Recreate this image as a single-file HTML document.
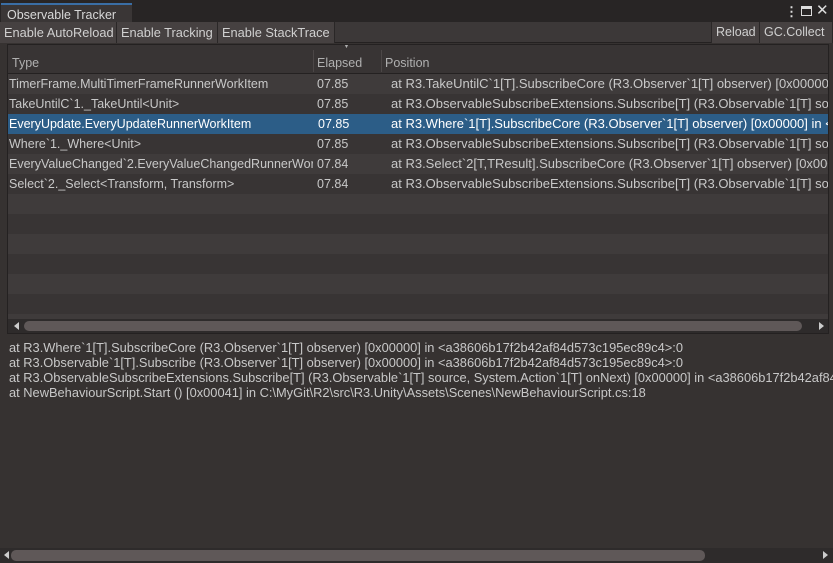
<!DOCTYPE html><html><head><style>
*{margin:0;padding:0;box-sizing:border-box}
body{width:833px;height:563px;background:#363231;font-family:"Liberation Sans",sans-serif;font-size:12.5px;color:#c8c8c8;position:relative;overflow:hidden}
.abs{position:absolute;white-space:nowrap;overflow:hidden}
.tabbar{left:0;top:0;width:833px;height:22px;background:#282525}
.tab{left:1px;top:3px;width:131px;height:19px;background:#3a3636;border-top:2px solid #3a6ea5;padding:3px 0 0 6px;color:#d8d8d8}
.tb{left:0;top:22px;width:833px;height:21px;background:#3c3838;border-bottom:1px solid #242121}
.btn{top:22px;height:21px;background:#464141;border-right:1px solid #2a2727;padding:3px 4px 0;color:#d0d0d0}
.table{left:7px;top:44px;width:822px;height:290px;border:1px solid #242121;background:#383434;overflow:hidden}
.row{position:absolute;left:0;width:822px;height:20px}
.row span{position:absolute;top:3px;white-space:nowrap}
.row span.p{font-size:13px;top:2px}
.sel{background:#2c5d87!important;color:#fff}
</style></head><body>
<div class="abs tabbar"></div>
<div class="abs tab">Observable Tracker</div>
<div class="abs" style="left:785px;top:4px;color:#ddd;font-size:13px;font-weight:bold">⋮</div>
<div class="abs" style="left:801px;top:6px;width:11px;height:10px;border:1.5px solid #ddd;border-top-width:3px"></div>
<div class="abs" style="left:816px;top:1px;color:#ddd;font-size:15px">✕</div>
<div class="abs tb"></div>
<div class="abs btn" style="left:0;width:117px;font-size:12.8px">Enable AutoReload</div>
<div class="abs btn" style="left:117px;width:101px;font-size:12.8px">Enable Tracking</div>
<div class="abs btn" style="left:218px;width:117px;font-size:12.8px">Enable StackTrace</div>
<div class="abs btn" style="left:711px;width:49px;border-left:1px solid #2a2727">Reload</div>
<div class="abs btn" style="left:760px;width:73px">GC.Collect</div>
<div class="abs table">
<div class="row" style="top:0;height:29px;background:#383434;border-bottom:1px solid #242121;color:#b0b0b0"><span style="left:4px;top:11px">Type</span><span style="left:335px;top:-2px;font-size:7px">▼</span><span style="left:309px;top:11px">Elapsed</span><span style="left:377px;top:11px">Position</span>
<div style="position:absolute;left:305px;top:5px;width:1px;height:22px;background:#4c4747"></div><div style="position:absolute;left:373px;top:5px;width:1px;height:22px;background:#4c4747"></div></div>
<div class="row" style="top:29px;background:#3f3b3b"><span style="left:1px">TimerFrame.MultiTimerFrameRunnerWorkItem</span><span style="left:309px">07.85</span><span class="p" style="left:383px">at R3.TakeUntilC`1[T].SubscribeCore (R3.Observer`1[T] observer) [0x00000] in &lt;a38606b17f2b42af84d573c195ec89c4&gt;:0</span></div>
<div class="row" style="top:49px"><span style="left:1px">TakeUntilC`1._TakeUntil&lt;Unit&gt;</span><span style="left:309px">07.85</span><span class="p" style="left:383px">at R3.ObservableSubscribeExtensions.Subscribe[T] (R3.Observable`1[T] source, System.Action`1[T] onNext)</span></div>
<div class="row sel" style="top:69px"><span style="left:1px">EveryUpdate.EveryUpdateRunnerWorkItem</span><span style="left:310px">07.85</span><span class="p" style="left:383px">at R3.Where`1[T].SubscribeCore (R3.Observer`1[T] observer) [0x00000] in &lt;a38606b17f2b42af84d573c195ec89c4&gt;:0</span></div>
<div class="row" style="top:89px"><span style="left:1px">Where`1._Where&lt;Unit&gt;</span><span style="left:309px">07.85</span><span class="p" style="left:383px">at R3.ObservableSubscribeExtensions.Subscribe[T] (R3.Observable`1[T] source, System.Action`1[T] onNext)</span></div>
<div class="row" style="top:109px;background:#3f3b3b"><span style="left:1px;width:304px;overflow:hidden">EveryValueChanged`2.EveryValueChangedRunnerWorkItem</span><span style="left:309px">07.84</span><span class="p" style="left:383px">at R3.Select`2[T,TResult].SubscribeCore (R3.Observer`1[T] observer) [0x00000] in &lt;a38606b17f2b42af84d573c195ec89c4&gt;:0</span></div>
<div class="row" style="top:129px"><span style="left:1px">Select`2._Select&lt;Transform, Transform&gt;</span><span style="left:309px">07.84</span><span class="p" style="left:383px">at R3.ObservableSubscribeExtensions.Subscribe[T] (R3.Observable`1[T] source, System.Action`1[T] onNext)</span></div>
<div class="row" style="top:149px;background:#3f3b3b"></div>
<div class="row" style="top:189px;background:#3f3b3b"></div>
<div class="row" style="top:229px;background:#3f3b3b"></div>
<div class="row" style="top:269px;background:#3f3b3b;height:6px"></div>
<div class="row" style="top:274px;height:15px;background:#2e2b2b"></div>
<div style="position:absolute;left:6px;top:277px;width:0;height:0;border-top:4px solid transparent;border-bottom:4px solid transparent;border-right:5px solid #ccc"></div>
<div style="position:absolute;left:16px;top:276px;width:778px;height:10px;border-radius:5px;background:#5f5858"></div>
<div style="position:absolute;left:811px;top:277px;width:0;height:0;border-top:4px solid transparent;border-bottom:4px solid transparent;border-left:5px solid #ccc"></div>
</div>
<div class="abs" style="left:9px;top:340px;width:824px;line-height:15px;font-size:12.85px;color:#c8c8c8">at R3.Where`1[T].SubscribeCore (R3.Observer`1[T] observer) [0x00000] in &lt;a38606b17f2b42af84d573c195ec89c4&gt;:0<br>at R3.Observable`1[T].Subscribe (R3.Observer`1[T] observer) [0x00000] in &lt;a38606b17f2b42af84d573c195ec89c4&gt;:0<br>at R3.ObservableSubscribeExtensions.Subscribe[T] (R3.Observable`1[T] source, System.Action`1[T] onNext) [0x00000] in &lt;a38606b17f2b42af84d573c195ec89c4&gt;:0<br>at NewBehaviourScript.Start () [0x00041] in C:\MyGit\R2\src\R3.Unity\Assets\Scenes\NewBehaviourScript.cs:18</div>
<div class="abs" style="left:0;top:548px;width:833px;height:15px;background:#2e2b2b"></div>
<div class="abs" style="left:4px;top:551px;width:0;height:0;border-top:4px solid transparent;border-bottom:4px solid transparent;border-right:5px solid #ccc"></div>
<div class="abs" style="left:11px;top:550px;width:694px;height:11px;border-radius:5px;background:#5f5858"></div>
<div class="abs" style="left:823px;top:551px;width:0;height:0;border-top:4px solid transparent;border-bottom:4px solid transparent;border-left:5px solid #ccc"></div>
</body></html>
